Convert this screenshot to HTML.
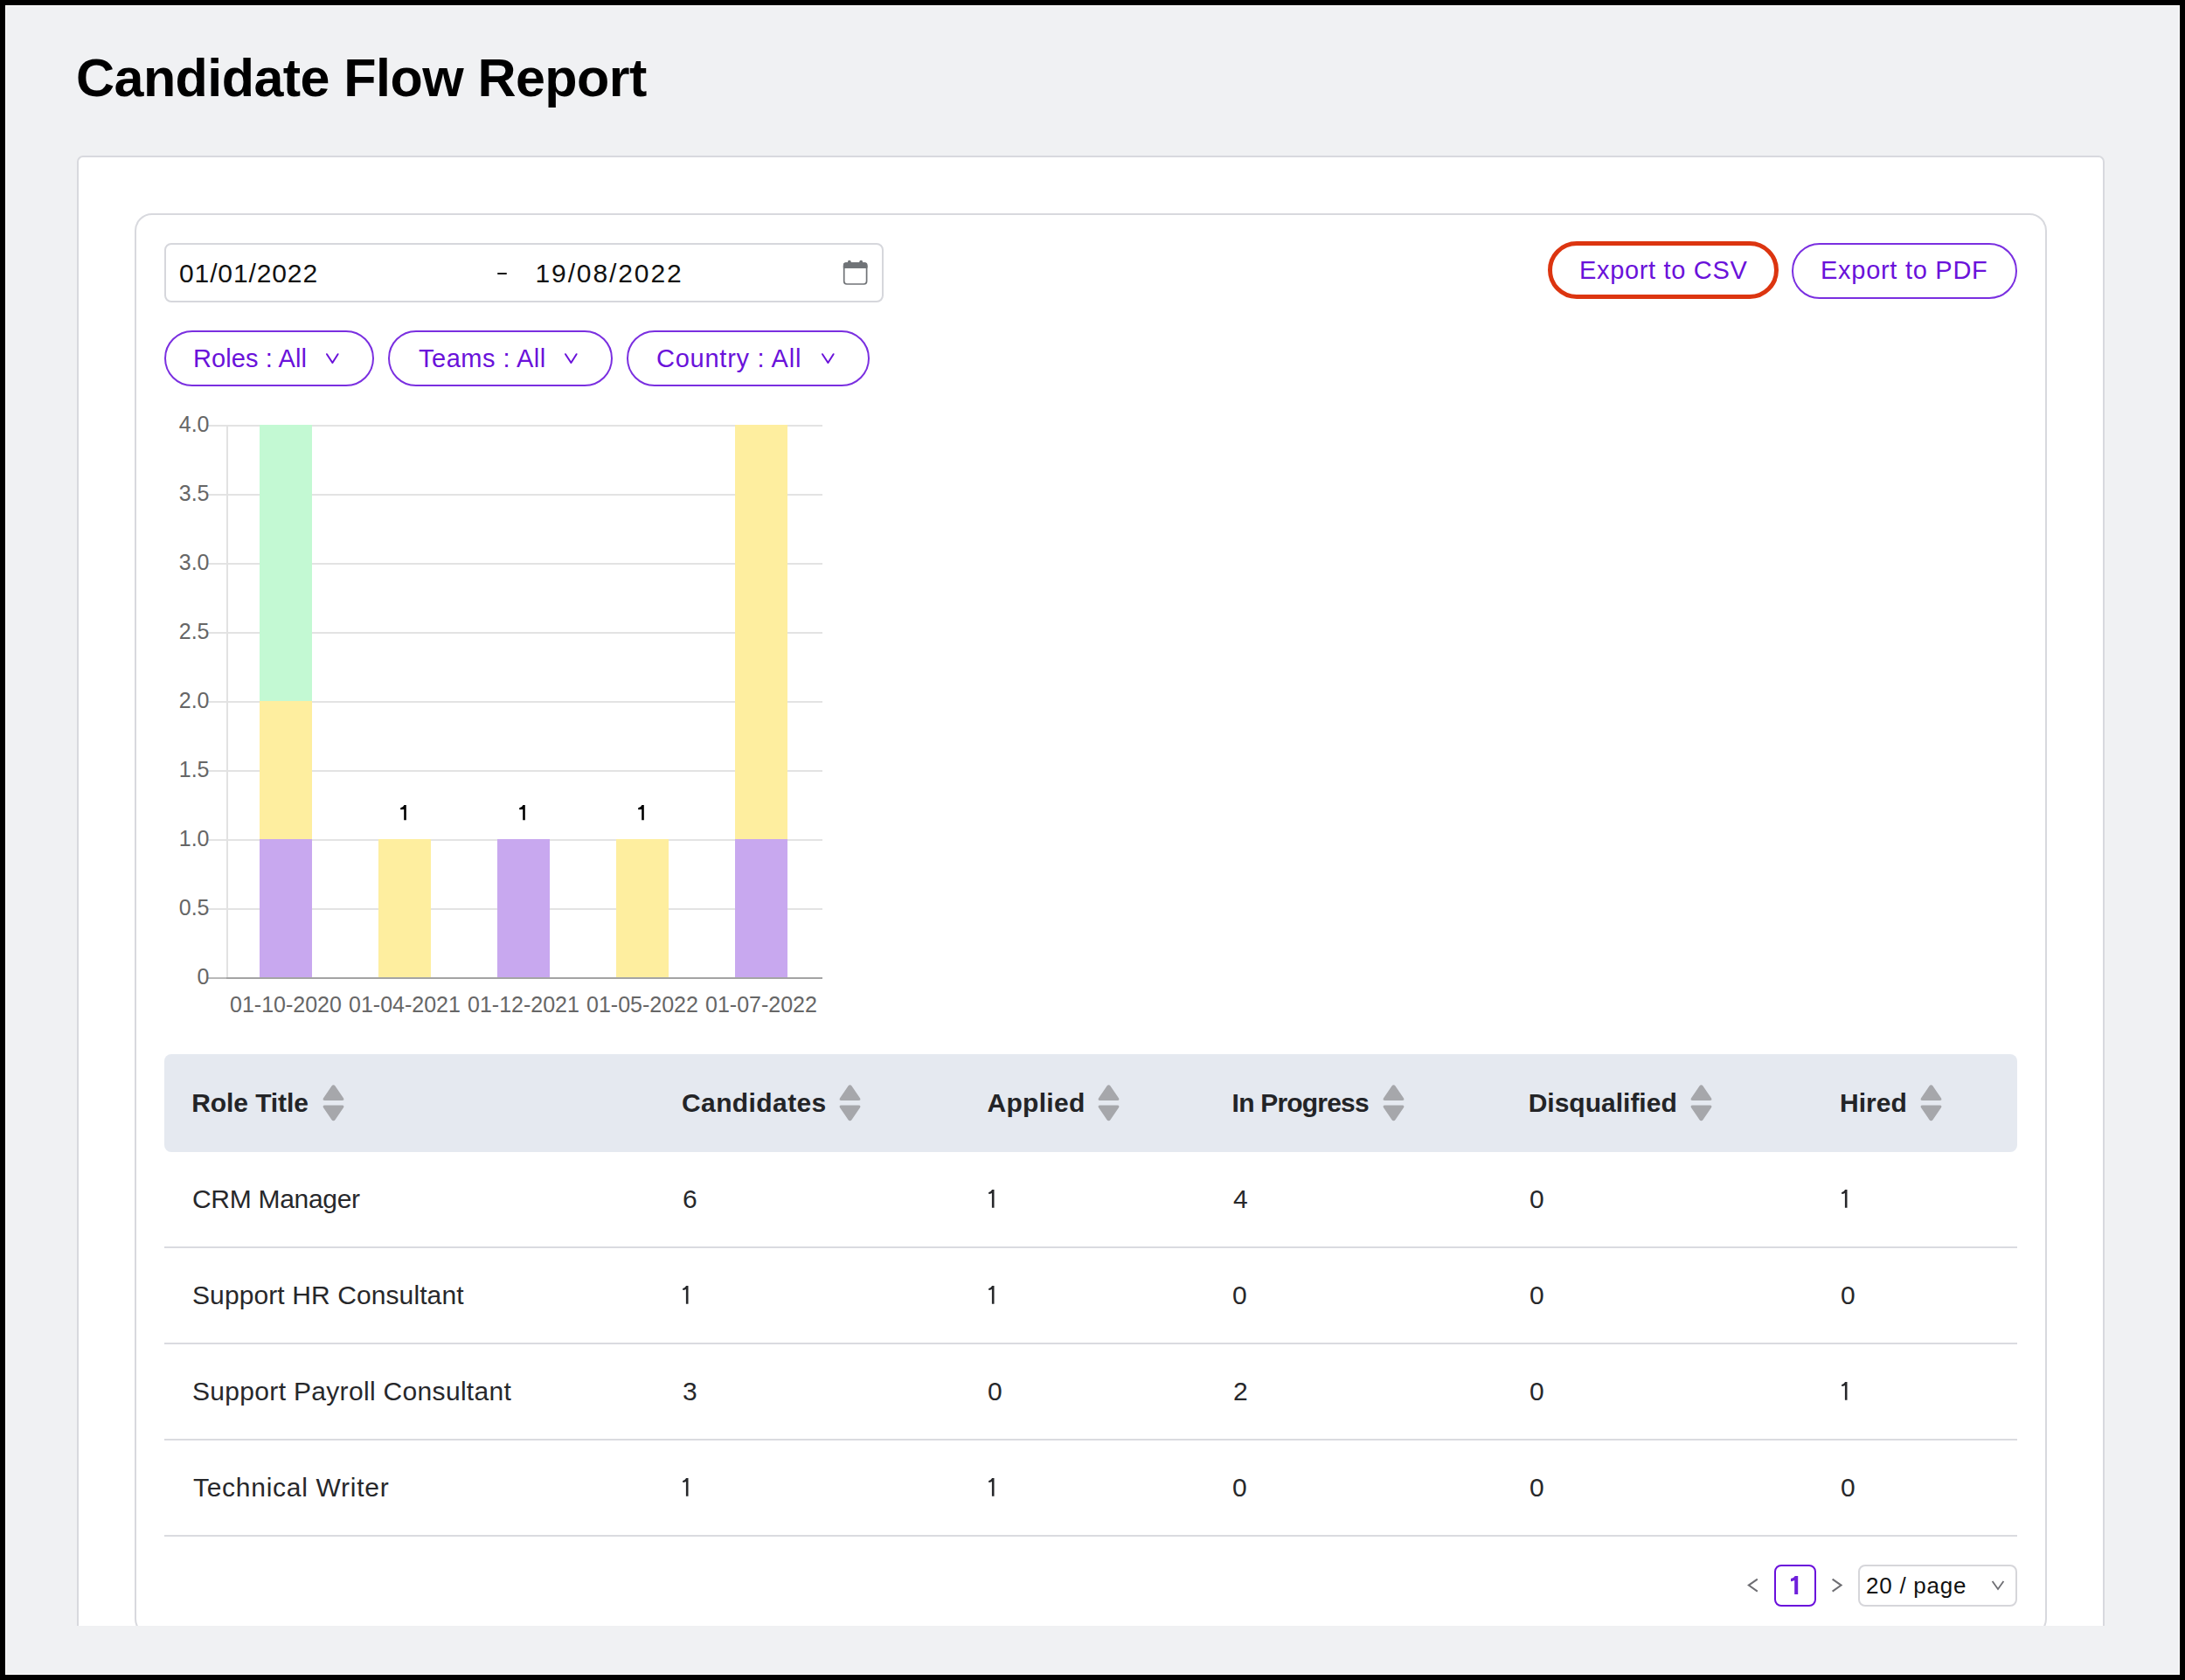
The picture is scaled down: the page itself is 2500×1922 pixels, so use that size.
<!DOCTYPE html>
<html>
<head>
<meta charset="utf-8">
<style>
html,body{margin:0;padding:0;}
body{width:2500px;height:1922px;background:#000;position:relative;overflow:hidden;font-family:"Liberation Sans",sans-serif;}
.abs{position:absolute;}
.t{position:absolute;white-space:nowrap;line-height:1;}
#frame{left:6px;top:6px;width:2488px;height:1910px;background:#fff;}
#page{left:7px;top:7px;width:2486px;height:1908px;background:#f0f1f3;overflow:hidden;}
#clip{left:0;top:0;width:2500px;height:1860px;overflow:hidden;}
.card{background:#fff;border:2px solid #d8d9de;box-sizing:border-box;}
.pill{position:absolute;box-sizing:border-box;border:2px solid #7a2fe0;border-radius:40px;height:64px;background:#fff;}
.purple{color:#6a12da;}
.hdr{font-weight:bold;font-size:30px;color:#232427;}
.cell{font-size:30px;color:#27282b;}
.sep{position:absolute;left:188px;width:2120px;height:2px;background:#dadbe0;}
.gl{position:absolute;left:238px;width:703px;height:2px;background:#e3e3e3;}
.yl{position:absolute;width:60px;text-align:right;font-size:25px;color:#666;line-height:1;}
.xl{position:absolute;width:136px;text-align:center;font-size:25px;color:#666;line-height:1;white-space:nowrap;}
.bar{position:absolute;width:60px;}
.sort{position:absolute;width:25px;height:43px;}
</style>
</head>
<body>
<div id="frame" class="abs"></div>
<div id="page" class="abs"></div>
<div class="abs" style="left:0;top:0;width:2500px;height:1922px;">
  <div id="clip" class="abs">
    <!-- title -->
    <div id="title" class="t" style="left:87px;top:58.5px;font-size:61px;font-weight:bold;color:#000;letter-spacing:-0.55px;">Candidate Flow Report</div>

    <!-- outer card -->
    <div class="abs card" style="left:88px;top:178px;width:2320px;height:1760px;border-radius:7px;"></div>
    <!-- inner card -->
    <div class="abs card" style="left:154px;top:244px;width:2188px;height:1628px;border-radius:20px;"></div>

    <!-- date input -->
    <div class="abs" style="left:188px;top:278px;width:823px;height:68px;box-sizing:border-box;border:2px solid #d6d7dc;border-radius:8px;"></div>
    <div id="d1" class="t" style="left:205px;top:298px;font-size:30px;color:#111;letter-spacing:0.88px;">01/01/2022</div>
    <div id="dash" class="abs" style="left:569px;top:312px;width:11px;height:2.4px;background:#111;border-radius:1px;"></div>
    <div id="d2" class="t" style="left:612.5px;top:298px;font-size:30px;color:#111;letter-spacing:1.89px;">19/08/2022</div>
    <svg class="abs" style="left:962px;top:295px" width="34" height="34" viewBox="0 0 34 34">
      <rect x="3.7" y="6.1" width="25.9" height="23.9" rx="3.2" fill="none" stroke="#707377" stroke-width="1.7"/>
      <rect x="2.85" y="5.25" width="27.6" height="6.6" rx="2.8" fill="#707377"/>
      <rect x="2.85" y="9" width="27.6" height="2.85" fill="#707377"/>
      <rect x="8" y="2.7" width="3.6" height="4.6" rx="1.6" fill="#707377"/>
      <rect x="21.4" y="2.7" width="3.6" height="4.6" rx="1.6" fill="#707377"/>
    </svg>

    <!-- export buttons -->
    <div class="abs" style="left:1771px;top:276px;width:264px;height:66px;box-sizing:border-box;border:5px solid #dc3510;border-radius:40px;background:#fff;"></div>
    <div id="bcsv" class="t purple" style="left:1807px;top:295px;font-size:29px;letter-spacing:0.67px;">Export to CSV</div>
    <div class="pill" style="left:2050px;top:278px;width:258px;"></div>
    <div id="bpdf" class="t purple" style="left:2083px;top:295px;font-size:29px;letter-spacing:0.72px;">Export to PDF</div>

    <!-- filter pills -->
    <div class="pill" style="left:188px;top:378px;width:240px;"></div>
    <div id="f1" class="t purple" style="left:221px;top:396px;font-size:29px;letter-spacing:0.1px;">Roles : All</div>
    <svg class="abs" style="left:371px;top:402px" width="18" height="16" viewBox="0 0 18 16"><polyline points="3,3.2 9.4,13 15.6,3.2" fill="none" stroke="#6a12da" stroke-width="2" stroke-linecap="round" stroke-linejoin="round"/></svg>
    <div class="pill" style="left:444px;top:378px;width:257px;"></div>
    <div id="f2" class="t purple" style="left:479px;top:396px;font-size:29px;letter-spacing:0.5px;">Teams : All</div>
    <svg class="abs" style="left:644px;top:402px" width="18" height="16" viewBox="0 0 18 16"><polyline points="3,3.2 9.4,13 15.6,3.2" fill="none" stroke="#6a12da" stroke-width="2" stroke-linecap="round" stroke-linejoin="round"/></svg>
    <div class="pill" style="left:717px;top:378px;width:278px;"></div>
    <div id="f3" class="t purple" style="left:751px;top:396px;font-size:29px;letter-spacing:0.75px;">Country : All</div>
    <svg class="abs" style="left:938px;top:402px" width="18" height="16" viewBox="0 0 18 16"><polyline points="3,3.2 9.4,13 15.6,3.2" fill="none" stroke="#6a12da" stroke-width="2" stroke-linecap="round" stroke-linejoin="round"/></svg>

    <!-- CHART -->
    <div id="chart">
<div class="gl" style="top:486px"></div>
<div class="gl" style="top:565px"></div>
<div class="gl" style="top:644px"></div>
<div class="gl" style="top:723px"></div>
<div class="gl" style="top:802px"></div>
<div class="gl" style="top:881px"></div>
<div class="gl" style="top:960px"></div>
<div class="gl" style="top:1039px"></div>
<div class="abs" style="left:238px;top:1118px;width:21px;height:2px;background:#b9b9b9"></div>
<div class="abs" style="left:259px;top:486px;width:2px;height:632px;background:#e2e2e2"></div>
<div class="bar" style="left:297px;top:960px;height:158px;background:#c8a8ef"></div>
<div class="bar" style="left:297px;top:802px;height:158px;background:#feee9f"></div>
<div class="bar" style="left:297px;top:486px;height:316px;background:#c3f9d3"></div>
<div class="bar" style="left:433px;top:960px;height:158px;background:#feee9f"></div>
<div class="bar" style="left:569px;top:960px;height:158px;background:#c8a8ef"></div>
<div class="bar" style="left:705px;top:960px;height:158px;background:#feee9f"></div>
<div class="bar" style="left:841px;top:960px;height:158px;background:#c8a8ef"></div>
<div class="bar" style="left:841px;top:486px;height:474px;background:#feee9f"></div>
<div class="abs" style="left:259px;top:1118px;width:682px;height:2px;background:#a4a4a4"></div>
<div class="yl" style="left:179.5px;top:472.75px">4.0</div>
<div class="yl" style="left:179.5px;top:551.75px">3.5</div>
<div class="yl" style="left:179.5px;top:630.75px">3.0</div>
<div class="yl" style="left:179.5px;top:709.75px">2.5</div>
<div class="yl" style="left:179.5px;top:788.75px">2.0</div>
<div class="yl" style="left:179.5px;top:867.75px">1.5</div>
<div class="yl" style="left:179.5px;top:946.75px">1.0</div>
<div class="yl" style="left:179.5px;top:1025.75px">0.5</div>
<div class="yl" style="left:179.5px;top:1104.75px">0</div>
<div class="xl" style="left:259px;top:1136.75px">01-10-2020</div>
<div class="xl" style="left:395px;top:1136.75px">01-04-2021</div>
<div class="xl" style="left:531px;top:1136.75px">01-12-2021</div>
<div class="xl" style="left:667px;top:1136.75px">01-05-2022</div>
<div class="xl" style="left:803px;top:1136.75px">01-07-2022</div>
<svg class="abs" style="left:457px;top:919.7px" width="10" height="20" viewBox="0 0 10 20"><path d="M6.2,1.1 L7.8,1.1 L7.8,18.2 L5.2,18.2 L5.2,6.1 L1.2,6.2 L1.2,4.3 Q4.4,4.0 5.4,1.1 Z" fill="#000"/></svg>
<svg class="abs" style="left:593px;top:919.7px" width="10" height="20" viewBox="0 0 10 20"><path d="M6.2,1.1 L7.8,1.1 L7.8,18.2 L5.2,18.2 L5.2,6.1 L1.2,6.2 L1.2,4.3 Q4.4,4.0 5.4,1.1 Z" fill="#000"/></svg>
<svg class="abs" style="left:729px;top:919.7px" width="10" height="20" viewBox="0 0 10 20"><path d="M6.2,1.1 L7.8,1.1 L7.8,18.2 L5.2,18.2 L5.2,6.1 L1.2,6.2 L1.2,4.3 Q4.4,4.0 5.4,1.1 Z" fill="#000"/></svg>
</div>

    <!-- TABLE -->
    <div id="table">
<div class="abs" style="left:188px;top:1206px;width:2120px;height:112px;background:#e5e9f0;border-radius:8px;"></div>
<div id="h0" class="t hdr" style="left:219.3px;top:1247px;letter-spacing:-0.1px">Role Title</div>
<svg class="sort" style="left:368.5px;top:1239.5px;overflow:visible" viewBox="0 0 25 43"><path d="M12.5 1.2 Q13.7 1.2 14.4 2.3 L24.1 16.5 Q25.2 19 22.4 19 L2.6 19 Q-0.2 19 0.9 16.5 L10.6 2.3 Q11.3 1.2 12.5 1.2Z" fill="#a6a7ab"/><path d="M12.5 42.3 Q13.7 42.3 14.4 41.2 L24.1 27 Q25.2 24.5 22.4 24.5 L2.6 24.5 Q-0.2 24.5 0.9 27 L10.6 41.2 Q11.3 42.3 12.5 42.3Z" fill="#a6a7ab"/></svg>
<div id="h1" class="t hdr" style="left:780.0px;top:1247px;letter-spacing:0.4px">Candidates</div>
<svg class="sort" style="left:960.4px;top:1239.5px;overflow:visible" viewBox="0 0 25 43"><path d="M12.5 1.2 Q13.7 1.2 14.4 2.3 L24.1 16.5 Q25.2 19 22.4 19 L2.6 19 Q-0.2 19 0.9 16.5 L10.6 2.3 Q11.3 1.2 12.5 1.2Z" fill="#a6a7ab"/><path d="M12.5 42.3 Q13.7 42.3 14.4 41.2 L24.1 27 Q25.2 24.5 22.4 24.5 L2.6 24.5 Q-0.2 24.5 0.9 27 L10.6 41.2 Q11.3 42.3 12.5 42.3Z" fill="#a6a7ab"/></svg>
<div id="h2" class="t hdr" style="left:1129.5px;top:1247px;letter-spacing:0.3px">Applied</div>
<svg class="sort" style="left:1256.4px;top:1239.5px;overflow:visible" viewBox="0 0 25 43"><path d="M12.5 1.2 Q13.7 1.2 14.4 2.3 L24.1 16.5 Q25.2 19 22.4 19 L2.6 19 Q-0.2 19 0.9 16.5 L10.6 2.3 Q11.3 1.2 12.5 1.2Z" fill="#a6a7ab"/><path d="M12.5 42.3 Q13.7 42.3 14.4 41.2 L24.1 27 Q25.2 24.5 22.4 24.5 L2.6 24.5 Q-0.2 24.5 0.9 27 L10.6 41.2 Q11.3 42.3 12.5 42.3Z" fill="#a6a7ab"/></svg>
<div id="h3" class="t hdr" style="left:1409.6px;top:1247px;letter-spacing:-0.8px">In Progress</div>
<svg class="sort" style="left:1581.8px;top:1239.5px;overflow:visible" viewBox="0 0 25 43"><path d="M12.5 1.2 Q13.7 1.2 14.4 2.3 L24.1 16.5 Q25.2 19 22.4 19 L2.6 19 Q-0.2 19 0.9 16.5 L10.6 2.3 Q11.3 1.2 12.5 1.2Z" fill="#a6a7ab"/><path d="M12.5 42.3 Q13.7 42.3 14.4 41.2 L24.1 27 Q25.2 24.5 22.4 24.5 L2.6 24.5 Q-0.2 24.5 0.9 27 L10.6 41.2 Q11.3 42.3 12.5 42.3Z" fill="#a6a7ab"/></svg>
<div id="h4" class="t hdr" style="left:1748.7px;top:1247px;letter-spacing:0px">Disqualified</div>
<svg class="sort" style="left:1933.8px;top:1239.5px;overflow:visible" viewBox="0 0 25 43"><path d="M12.5 1.2 Q13.7 1.2 14.4 2.3 L24.1 16.5 Q25.2 19 22.4 19 L2.6 19 Q-0.2 19 0.9 16.5 L10.6 2.3 Q11.3 1.2 12.5 1.2Z" fill="#a6a7ab"/><path d="M12.5 42.3 Q13.7 42.3 14.4 41.2 L24.1 27 Q25.2 24.5 22.4 24.5 L2.6 24.5 Q-0.2 24.5 0.9 27 L10.6 41.2 Q11.3 42.3 12.5 42.3Z" fill="#a6a7ab"/></svg>
<div id="h5" class="t hdr" style="left:2105.1px;top:1247px;letter-spacing:0px">Hired</div>
<svg class="sort" style="left:2196.9px;top:1239.5px;overflow:visible" viewBox="0 0 25 43"><path d="M12.5 1.2 Q13.7 1.2 14.4 2.3 L24.1 16.5 Q25.2 19 22.4 19 L2.6 19 Q-0.2 19 0.9 16.5 L10.6 2.3 Q11.3 1.2 12.5 1.2Z" fill="#a6a7ab"/><path d="M12.5 42.3 Q13.7 42.3 14.4 41.2 L24.1 27 Q25.2 24.5 22.4 24.5 L2.6 24.5 Q-0.2 24.5 0.9 27 L10.6 41.2 Q11.3 42.3 12.5 42.3Z" fill="#a6a7ab"/></svg>
<div class="sep" style="top:1426px"></div>
<div class="sep" style="top:1536px"></div>
<div class="sep" style="top:1646px"></div>
<div class="sep" style="top:1756px"></div>
<div id="c00" class="t cell" style="left:220px;top:1357.0px;letter-spacing:-0.3px">CRM Manager</div>
<div id="c01" class="t cell" style="left:781px;top:1357.0px;">6</div>
<svg id="c02" class="abs" style="left:1130px;top:1360.3px" width="10" height="24" viewBox="0 0 10 24"><path d="M5.1,1 L7.5,1 L7.5,21.7 L4.9,21.7 L4.9,5 Q3.2,5.9 1.3,6.1 L1,4.3 Q3.4,3.8 5.1,1 Z" fill="#27282b"/></svg>
<div id="c03" class="t cell" style="left:1411px;top:1357.0px;">4</div>
<div id="c04" class="t cell" style="left:1750px;top:1357.0px;">0</div>
<svg id="c05" class="abs" style="left:2106px;top:1360.3px" width="10" height="24" viewBox="0 0 10 24"><path d="M5.1,1 L7.5,1 L7.5,21.7 L4.9,21.7 L4.9,5 Q3.2,5.9 1.3,6.1 L1,4.3 Q3.4,3.8 5.1,1 Z" fill="#27282b"/></svg>
<div id="c10" class="t cell" style="left:220px;top:1467.0px;letter-spacing:0.1px">Support HR Consultant</div>
<svg id="c11" class="abs" style="left:780px;top:1470.3px" width="10" height="24" viewBox="0 0 10 24"><path d="M5.1,1 L7.5,1 L7.5,21.7 L4.9,21.7 L4.9,5 Q3.2,5.9 1.3,6.1 L1,4.3 Q3.4,3.8 5.1,1 Z" fill="#27282b"/></svg>
<svg id="c12" class="abs" style="left:1130px;top:1470.3px" width="10" height="24" viewBox="0 0 10 24"><path d="M5.1,1 L7.5,1 L7.5,21.7 L4.9,21.7 L4.9,5 Q3.2,5.9 1.3,6.1 L1,4.3 Q3.4,3.8 5.1,1 Z" fill="#27282b"/></svg>
<div id="c13" class="t cell" style="left:1410px;top:1467.0px;">0</div>
<div id="c14" class="t cell" style="left:1750px;top:1467.0px;">0</div>
<div id="c15" class="t cell" style="left:2106px;top:1467.0px;">0</div>
<div id="c20" class="t cell" style="left:220px;top:1577.0px;letter-spacing:0.32px">Support Payroll Consultant</div>
<div id="c21" class="t cell" style="left:781px;top:1577.0px;">3</div>
<div id="c22" class="t cell" style="left:1130px;top:1577.0px;">0</div>
<div id="c23" class="t cell" style="left:1411px;top:1577.0px;">2</div>
<div id="c24" class="t cell" style="left:1750px;top:1577.0px;">0</div>
<svg id="c25" class="abs" style="left:2106px;top:1580.3px" width="10" height="24" viewBox="0 0 10 24"><path d="M5.1,1 L7.5,1 L7.5,21.7 L4.9,21.7 L4.9,5 Q3.2,5.9 1.3,6.1 L1,4.3 Q3.4,3.8 5.1,1 Z" fill="#27282b"/></svg>
<div id="c30" class="t cell" style="left:221px;top:1687.0px;letter-spacing:0.72px">Technical Writer</div>
<svg id="c31" class="abs" style="left:780px;top:1690.3px" width="10" height="24" viewBox="0 0 10 24"><path d="M5.1,1 L7.5,1 L7.5,21.7 L4.9,21.7 L4.9,5 Q3.2,5.9 1.3,6.1 L1,4.3 Q3.4,3.8 5.1,1 Z" fill="#27282b"/></svg>
<svg id="c32" class="abs" style="left:1130px;top:1690.3px" width="10" height="24" viewBox="0 0 10 24"><path d="M5.1,1 L7.5,1 L7.5,21.7 L4.9,21.7 L4.9,5 Q3.2,5.9 1.3,6.1 L1,4.3 Q3.4,3.8 5.1,1 Z" fill="#27282b"/></svg>
<div id="c33" class="t cell" style="left:1410px;top:1687.0px;">0</div>
<div id="c34" class="t cell" style="left:1750px;top:1687.0px;">0</div>
<div id="c35" class="t cell" style="left:2106px;top:1687.0px;">0</div>
</div>

    <!-- PAGINATION -->
    <div id="pager">
<svg class="abs" style="left:1997px;top:1803px" width="18" height="22" viewBox="0 0 18 22"><polyline points="13.8,3.6 3.8,10.6 13.8,17.6" fill="none" stroke="#6e6e73" stroke-width="2"/></svg>
<div class="abs" style="left:2030px;top:1790px;width:48px;height:48px;box-sizing:border-box;border:2px solid #6a0fdb;border-radius:8px;"></div>
<svg id="pg1" class="abs" style="left:2040px;top:1798px" width="28" height="30" viewBox="0 0 28 30"><path d="M13.2,26 L17.2,26 L17.2,5 L13.8,5 Q12.4,7.4 9,8 L9,11.3 Q11.6,11.1 13.2,10 Z" fill="#6f20db"/></svg>
<svg class="abs" style="left:2093px;top:1803px" width="18" height="22" viewBox="0 0 18 22"><polyline points="3.6,3.6 13.6,10.6 3.6,17.6" fill="none" stroke="#6e6e73" stroke-width="2"/></svg>
<div class="abs" style="left:2126px;top:1790px;width:182px;height:48px;box-sizing:border-box;border:2px solid #d6d6da;border-radius:8px;"></div>
<div id="pgs" class="t" style="left:2135px;top:1801px;font-size:26px;color:#111;letter-spacing:0.75px;">20 / page</div>
<svg class="abs" style="left:2277px;top:1806px" width="18" height="16" viewBox="0 0 18 16"><polyline points="2.6,3 9,12 15.4,3" fill="none" stroke="#6e6e73" stroke-width="1.8"/></svg>

</div>
  </div>
</div>
</body>
</html>
